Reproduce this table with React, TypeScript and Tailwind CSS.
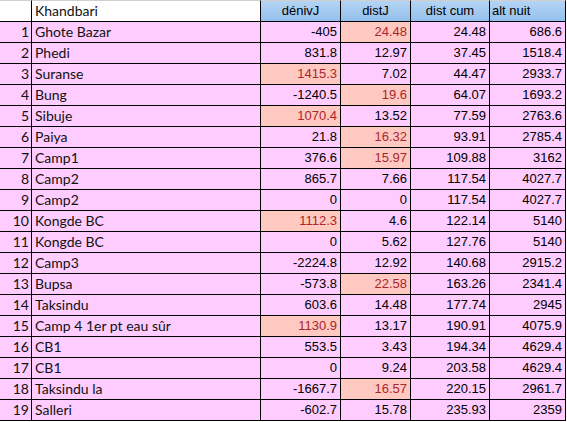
import React from "react";

type Row = [string, string, string, string, string, boolean, boolean];

const rows: Row[] = [
  ["Ghote Bazar", "-405", "24.48", "24.48", "686.6", false, true],
  ["Phedi", "831.8", "12.97", "37.45", "1518.4", false, false],
  ["Suranse", "1415.3", "7.02", "44.47", "2933.7", true, false],
  ["Bung", "-1240.5", "19.6", "64.07", "1693.2", false, true],
  ["Sibuje", "1070.4", "13.52", "77.59", "2763.6", true, false],
  ["Paiya", "21.8", "16.32", "93.91", "2785.4", false, true],
  ["Camp1", "376.6", "15.97", "109.88", "3162", false, true],
  ["Camp2", "865.7", "7.66", "117.54", "4027.7", false, false],
  ["Camp2", "0", "0", "117.54", "4027.7", false, false],
  ["Kongde BC", "1112.3", "4.6", "122.14", "5140", true, false],
  ["Kongde BC", "0", "5.62", "127.76", "5140", false, false],
  ["Camp3", "-2224.8", "12.92", "140.68", "2915.2", false, false],
  ["Bupsa", "-573.8", "22.58", "163.26", "2341.4", false, true],
  ["Taksindu", "603.6", "14.48", "177.74", "2945", false, false],
  ["Camp 4 1er pt eau sûr", "1130.9", "13.17", "190.91", "4075.9", true, false],
  ["CB1", "553.5", "3.43", "194.34", "4629.4", false, false],
  ["CB1", "0", "9.24", "203.58", "4629.4", false, false],
  ["Taksindu la", "-1667.7", "16.57", "220.15", "2961.7", false, true],
  ["Salleri", "-602.7", "15.78", "235.93", "2359", false, false],
];

const calibri = "font-['Lato','Open_Sans',sans-serif]";
const arial = "font-['Liberation_Sans',Arial,sans-serif]";

export default function App() {
  return (
    <div className="w-[567px] h-[422px] bg-white overflow-hidden">
      <div className="grid grid-cols-[32px_229px_80px_70px_79px_76px]">
        {/* header */}
        <div className="h-[22px] bg-white border-t border-t-[#d0d0d0] border-r border-b border-black" />
        <div className={`h-[22px] bg-white border-t border-t-[#d0d0d0] border-r border-b border-black pl-[3px] text-[14px] leading-[20px] text-[#111] ${calibri}`}>
          Khandbari
        </div>
        <div className={`h-[22px] bg-gradient-to-b from-[#b4d4f4] to-[#94c0ec] border-t border-t-[#d0d0d0] border-r border-b border-black text-center text-[13px] leading-[20px] text-black ${arial}`}>
          dénivJ
        </div>
        <div className={`h-[22px] bg-gradient-to-b from-[#b4d4f4] to-[#94c0ec] border-t border-t-[#d0d0d0] border-r border-b border-black text-center text-[13px] leading-[20px] text-black ${arial}`}>
          distJ
        </div>
        <div className={`h-[22px] bg-gradient-to-b from-[#b4d4f4] to-[#94c0ec] border-t border-t-[#d0d0d0] border-r border-b border-black text-center text-[13px] leading-[20px] text-black ${arial}`}>
          dist cum
        </div>
        <div className={`h-[22px] bg-gradient-to-b from-[#b4d4f4] to-[#94c0ec] border-t border-t-[#d0d0d0] border-r border-b border-black pl-[2px] text-[13px] leading-[20px] text-black ${arial}`}>
          alt nuit
        </div>

        {rows.map((r, i) => (
          <React.Fragment key={i}>
            <div className={`h-[21px] bg-[#ffccff] border-r border-b border-black text-right pr-[2px] text-[14px] leading-[20px] text-[#111] ${calibri}`}>
              {i + 1}
            </div>
            <div className={`h-[21px] bg-[#ffccff] border-r border-b border-black pl-[3px] text-[14px] leading-[20px] text-[#111] whitespace-nowrap ${calibri}`}>
              {r[0]}
            </div>
            <div
              className={`h-[21px] border-r border-b border-black text-right pr-[3px] text-[13px] leading-[20px] ${arial} ${
                r[5] ? "bg-[#ffc9c2] text-[#a8262c]" : "bg-[#ffccff] text-black"
              }`}
            >
              {r[1]}
            </div>
            <div
              className={`h-[21px] border-r border-b border-black text-right pr-[3px] text-[13px] leading-[20px] ${arial} ${
                r[6] ? "bg-[#ffc9c2] text-[#a8262c]" : "bg-[#ffccff] text-black"
              }`}
            >
              {r[2]}
            </div>
            <div className={`h-[21px] bg-[#ffccff] border-r border-b border-black text-right pr-[3px] text-[13px] leading-[20px] text-black ${arial}`}>
              {r[3]}
            </div>
            <div className={`h-[21px] bg-[#ffccff] border-r border-b border-black text-right pr-[3px] text-[13px] leading-[20px] text-black ${arial}`}>
              {r[4]}
            </div>
          </React.Fragment>
        ))}
      </div>
    </div>
  );
}
